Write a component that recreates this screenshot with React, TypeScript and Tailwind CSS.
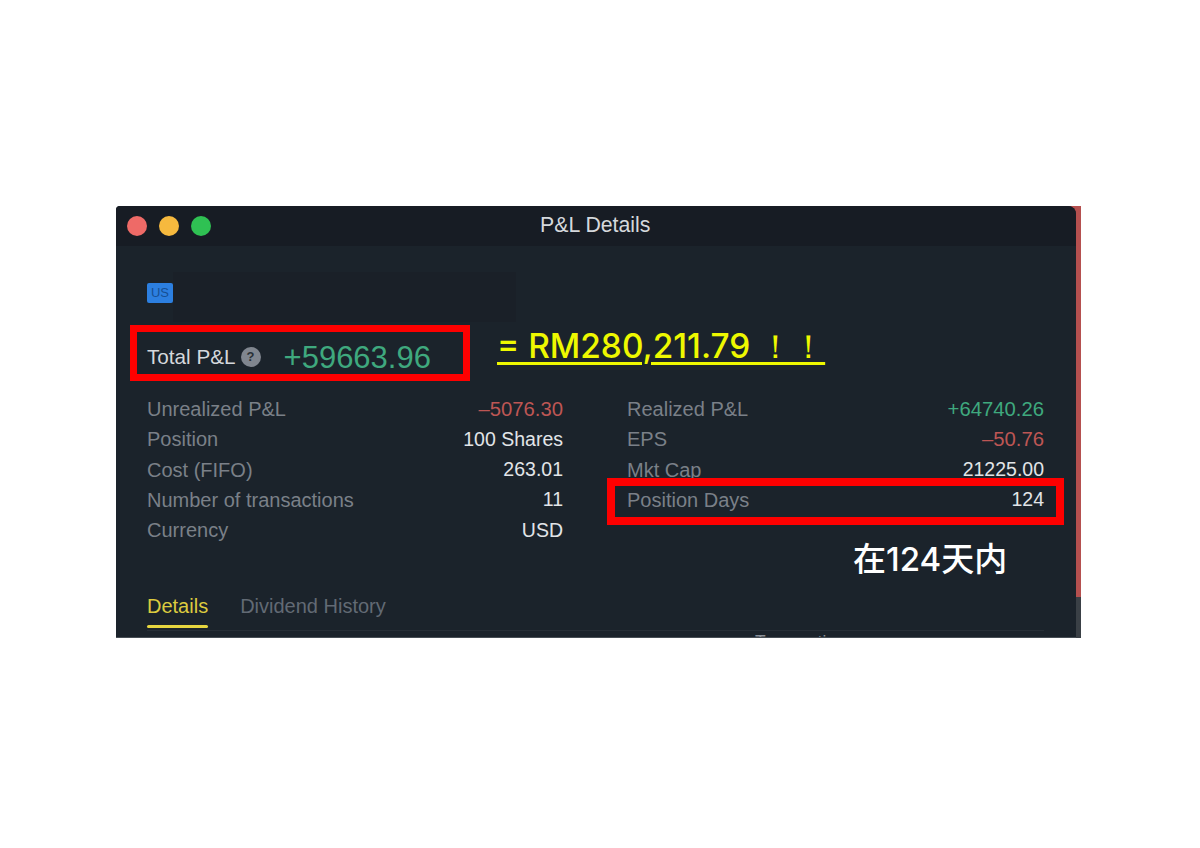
import React from 'react';

const FONT = "font-['Liberation_Sans',Arial,sans-serif]";

interface Row {
  label: string;
  value: string;
  tone?: 'up' | 'down';
}

const leftRows: Row[] = [
  { label: 'Unrealized P&L', value: '–5076.30', tone: 'down' },
  { label: 'Position', value: '100 Shares' },
  { label: 'Cost (FIFO)', value: '263.01' },
  { label: 'Number of transactions', value: '11' },
  { label: 'Currency', value: 'USD' },
];

const rightRows: Row[] = [
  { label: 'Realized P&L', value: '+64740.26', tone: 'up' },
  { label: 'EPS', value: '–50.76', tone: 'down' },
  { label: 'Mkt Cap', value: '21225.00' },
  { label: 'Position Days', value: '124' },
];

const StatColumn = ({ rows }: { rows: Row[] }) => (
  <div className="flex flex-col">
    {rows.map((row) => (
      <div key={row.label} className="flex h-[30.3px] items-center justify-between">
        <span className="text-[20px] text-[#7a8088]">{row.label}</span>
        <span
          className={
            row.tone === 'up'
              ? 'text-[20.3px] text-[#3fa97e]'
              : row.tone === 'down'
                ? 'text-[20.3px] text-[#bd5654]'
                : 'text-[19.5px] text-[#e2e5e8]'
          }
        >
          {row.value}
        </span>
      </div>
    ))}
  </div>
);

const App = () => {
  return (
    <div className={`min-h-[848px] bg-white pl-[116px] pt-[206px] ${FONT}`}>
      <div className="relative h-[432px] w-[965px]">
        {/* sliver of the next window behind this one */}
        <div className="absolute inset-y-0 right-0 flex w-[12px] flex-col">
          <div className="h-[391px] bg-[#b5504f]" />
          <div className="flex-1 bg-[#3a4046]" />
        </div>

        <div className="relative flex h-full w-[960px] flex-col overflow-hidden rounded-tl-[4px] rounded-tr-[8px] border-b border-[#474e55] bg-[#1b232b]">
          {/* title bar */}
          <div className="relative flex h-[40px] shrink-0 items-center bg-[#171c24] pl-[11px]">
            <div className="flex gap-[12px]">
              <span className="h-[20px] w-[20px] rounded-full bg-[#ee6a67]" />
              <span className="h-[20px] w-[20px] rounded-full bg-[#f6b93e]" />
              <span className="h-[20px] w-[20px] rounded-full bg-[#2fc153]" />
            </div>
            <span className="absolute left-[424px] top-[7px] text-[21.3px] leading-[24px] text-[#d5d8dc]">
              P&amp;L Details
            </span>
          </div>

          <div className="flex flex-1 flex-col pl-[31px] pr-[32px]">
            {/* ticker strip */}
            <div className="mt-[26px] flex h-[50px] shrink-0 items-start">
              <span className="mt-[11px] flex h-[20px] w-[26px] items-center justify-center rounded-[2px] bg-[#2c7fe0] text-[13px] text-[#174f93]">
                US
              </span>
              <div className="h-full w-[343px] bg-[#1a2028]" />
            </div>

            {/* total */}
            <div className="mt-[8px] flex h-[54px] shrink-0 items-center">
              <span className="text-[20.7px] text-[#d5d8dc]">Total P&amp;L</span>
              <span className="ml-[5px] flex h-[20px] w-[20px] items-center justify-center rounded-full bg-[#80868f] text-[13px] font-bold text-[#2a3037]">
                ?
              </span>
              <span className="ml-[23px] text-[31px] leading-none text-[#3fa97e]">+59663.96</span>
            </div>

            {/* stats */}
            <div className="mt-[10px] grid shrink-0 grid-cols-[416px_417px] gap-x-[64px]">
              <StatColumn rows={leftRows} />
              <StatColumn rows={rightRows} />
            </div>

            {/* tabs */}
            <div className="mt-[46px] flex h-[40px] shrink-0 gap-[32px] border-b border-[#262e36] text-[20px]">
              <div className="flex h-[37px] flex-col justify-between">
                <span className="text-[#dccb3f]">Details</span>
                <span className="h-[3px] rounded-full bg-[#e6d53f]" />
              </div>
              <span className="text-[#626a74]">Dividend History</span>
            </div>
            <div className="pl-[608px] text-[17.5px] leading-[22px] text-[#8a9098]">Transaction</div>
          </div>
        </div>

        {/* annotations */}
        <div className="absolute left-[14px] top-[119px] h-[56px] w-[340px] border-[7px] border-[#fe0000]" />
        <div className="absolute left-[491px] top-[272px] h-[47px] w-[457px] border-[8px] border-[#fe0000]" />
        <span className="absolute left-[381px] top-[118px] font-['Inter',sans-serif] text-[33.4px] font-medium leading-[44px] text-[#eef800] underline decoration-[3px] underline-offset-[4px]">
          = RM280,211.79 ！！
        </span>
        <span className="absolute left-[737px] top-[331px] font-['Inter','Noto_Sans_CJK_SC',sans-serif] text-[33px] font-medium leading-[44px] text-white">
          在124天内
        </span>
      </div>
    </div>
  );
};

export default App;
